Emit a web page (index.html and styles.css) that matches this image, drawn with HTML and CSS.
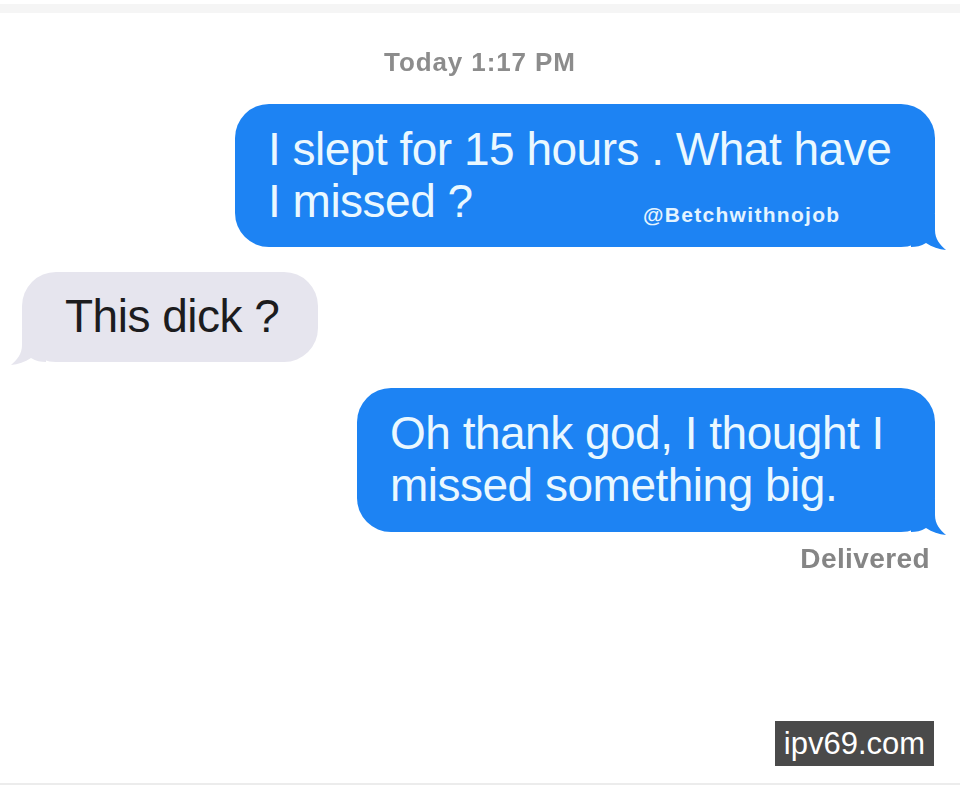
FILE: index.html
```html
<!DOCTYPE html>
<html>
<head>
<meta charset="utf-8">
<link rel="stylesheet" href="styles.css">
</head>
<body>
<div class="page">
  <div class="topband"></div>
  <div class="time">Today 1:17 PM</div>
  <div class="row out first">
    <div class="bubble blue b1">
      <div class="txt">I slept for 15 hours . What have<br>I missed ?</div>
      <div class="credit">@Betchwithnojob</div>
      <svg class="tail tail-r" width="36" height="36" viewBox="0 0 36 36"><path d="M0,0 H24 V16 C24,25 29,31 35,36 C28,35.5 21,33 15,29 C10,32 5,33 0,33 Z" fill="#1d83f3"/></svg>
    </div>
  </div>
  <div class="row in">
    <div class="bubble gray">
      <div class="txt">This dick ?</div>
      <svg class="tail tail-l" width="36" height="36" viewBox="0 0 36 36"><path d="M36,0 H12 V16 C12,25 7,31 1,36 C8,35.5 15,33 21,29 C26,32 31,33 36,33 Z" fill="#e6e5ee"/></svg>
    </div>
  </div>
  <div class="row out second">
    <div class="bubble blue b2">
      <div class="txt">Oh thank god, I thought I<br>missed something big.</div>
      <svg class="tail tail-r" width="36" height="36" viewBox="0 0 36 36"><path d="M0,0 H24 V16 C24,25 29,31 35,36 C28,35.5 21,33 15,29 C10,32 5,33 0,33 Z" fill="#1d83f3"/></svg>
    </div>
  </div>
  <div class="delivered">Delivered</div>
  <div class="spacer"></div>
  <div class="bottomline"></div>
  <div class="watermark">ipv69.com</div>
</div>
</body>
</html>
```
FILE: styles.css
```css
html, body {
  margin: 0;
  padding: 0;
  background: #ffffff;
}
.page {
  position: relative;
  width: 960px;
  height: 792px;
  display: flex;
  flex-direction: column;
  font-family: "Liberation Sans", Arial, sans-serif;
  overflow: hidden;
}
.topband {
  height: 9px;
  margin-top: 4px;
  background: #f5f5f5;
}
.time {
  margin-top: 34px;
  text-align: center;
  font-size: 26px;
  font-weight: bold;
  color: #8c8c8c;
  line-height: 30px;
  letter-spacing: 0.9px;
  filter: blur(0.6px);
}
.row {
  display: flex;
}
.row.out {
  justify-content: flex-end;
  padding-right: 25px;
}
.row.in {
  justify-content: flex-start;
  padding-left: 22px;
  margin-top: 25px;
}
.row.first { margin-top: 27px; }
.row.second { margin-top: 26px; }
.bubble {
  position: relative;
  border-radius: 34px;
  box-sizing: border-box;
  display: flex;
  align-items: center;
}
.bubble .txt {
  position: relative;
  z-index: 1;
  font-size: 46px;
  line-height: 52px;
  letter-spacing: -0.5px;
}
.blue {
  background: #1d83f3;
  color: #eaf8ff;
}
.b1 {
  width: 700px;
  height: 143px;
  padding-left: 33px;
  padding-bottom: 2px;
}
.b2 {
  width: 578px;
  height: 144px;
  padding-left: 33px;
  padding-bottom: 2px;
}
.tail {
  position: absolute;
  bottom: -3px;
}
.tail-r { right: -12px; }
.tail-l { left: -12px; }
.credit {
  position: absolute;
  z-index: 1;
  left: 408px;
  top: 99px;
  font-size: 21px;
  font-weight: bold;
  color: #e4f4ff;
  letter-spacing: 1.3px;
}
.gray {
  width: 296px;
  height: 90px;
  padding-left: 43px;
  background: #e6e5ee;
  color: #1c1c1e;
}
.gray .txt { padding-bottom: 2px; }
.delivered {
  margin-top: 12px;
  align-self: flex-end;
  margin-right: 30px;
  font-size: 28px;
  font-weight: bold;
  color: #858585;
  line-height: 30px;
  letter-spacing: 0.4px;
  filter: blur(0.4px);
}
.spacer { flex: 1; }
.bottomline {
  height: 2px;
  background: #ececec;
  margin-bottom: 7px;
}
.watermark {
  position: absolute;
  left: 775px;
  top: 721px;
  width: 159px;
  height: 45px;
  background: #4a4a4a;
  color: #ffffff;
  font-size: 31px;
  line-height: 45px;
  text-align: center;
}
```
